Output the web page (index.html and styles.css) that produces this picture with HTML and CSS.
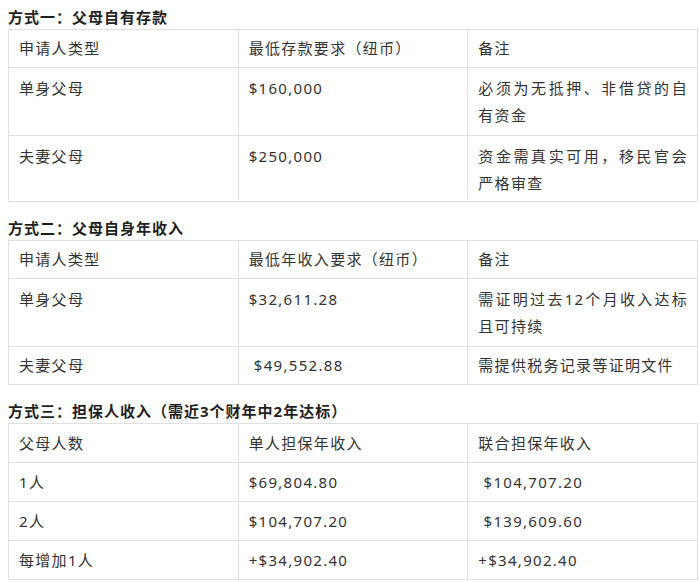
FILE: index.html
```html
<!DOCTYPE html>
<html lang="zh-CN">
<head>
<meta charset="utf-8">
<title>父母移民资金要求</title>
<link rel="stylesheet" href="styles.css">
</head>
<body>
<main class="page">
  <h3 class="title">方式一：父母自有存款</h3>
  <table class="grid">
    <tr class="head"><td>申请人类型</td><td>最低存款要求（纽币）</td><td>备注</td></tr>
    <tr class="tall"><td>单身父母</td><td>$160,000</td><td class="note">必须为无抵押、非借贷的自有资金</td></tr>
    <tr class="tall last"><td>夫妻父母</td><td>$250,000</td><td class="note">资金需真实可用，移民官会严格审查</td></tr>
  </table>

  <h3 class="title">方式二：父母自身年收入</h3>
  <table class="grid">
    <tr class="head"><td>申请人类型</td><td>最低年收入要求（纽币）</td><td>备注</td></tr>
    <tr class="tall"><td>单身父母</td><td>$32,611.28</td><td class="note">需证明过去12个月收入达标且可持续</td></tr>
    <tr class="head"><td>夫妻父母</td><td>&nbsp;$49,552.88</td><td>需提供税务记录等证明文件</td></tr>
  </table>

  <h3 class="title">方式三：担保人收入（需近3个财年中2年达标）</h3>
  <table class="grid">
    <tr class="row"><td>父母人数</td><td>单人担保年收入</td><td>联合担保年收入</td></tr>
    <tr class="row"><td>1人</td><td>$69,804.80</td><td>&nbsp;$104,707.20</td></tr>
    <tr class="row"><td>2人</td><td>$104,707.20</td><td>&nbsp;$139,609.60</td></tr>
    <tr class="row"><td>每增加1人</td><td>+$34,902.40</td><td>+$34,902.40</td></tr>
  </table>
</main>
</body>
</html>
```
FILE: styles.css
```css
html, body {
  margin: 0;
  padding: 0;
  background: #ffffff;
}

.page {
  padding: 5px 2px 0 8px;
  font-family: "Noto Sans", "Noto Sans CJK SC", sans-serif;
  color: #333333;
}

.title {
  margin: 0;
  font-size: 15px;
  line-height: 24px;
  font-weight: bold;
  color: #1f1f1f;
  letter-spacing: 1px;
}

.grid + .title {
  margin-top: 14px;
}

.grid {
  width: 690px;
  table-layout: fixed;
  border-collapse: collapse;
  font-size: 15px;
  line-height: 27px;
  letter-spacing: 1.3px;
}

.grid td {
  border: 1px solid #e0e0e0;
  vertical-align: top;
  padding: 5px 9px 5px 10px;
  word-break: break-all;
}

.grid .tall td {
  padding: 7px 9px 6px 10px;
}

.grid .tall.last td {
  padding: 7px 9px 4px 10px;
}

.grid .row td {
  padding: 6px 9px 5px 10px;
}

.note {
  text-align: justify;
}
```
